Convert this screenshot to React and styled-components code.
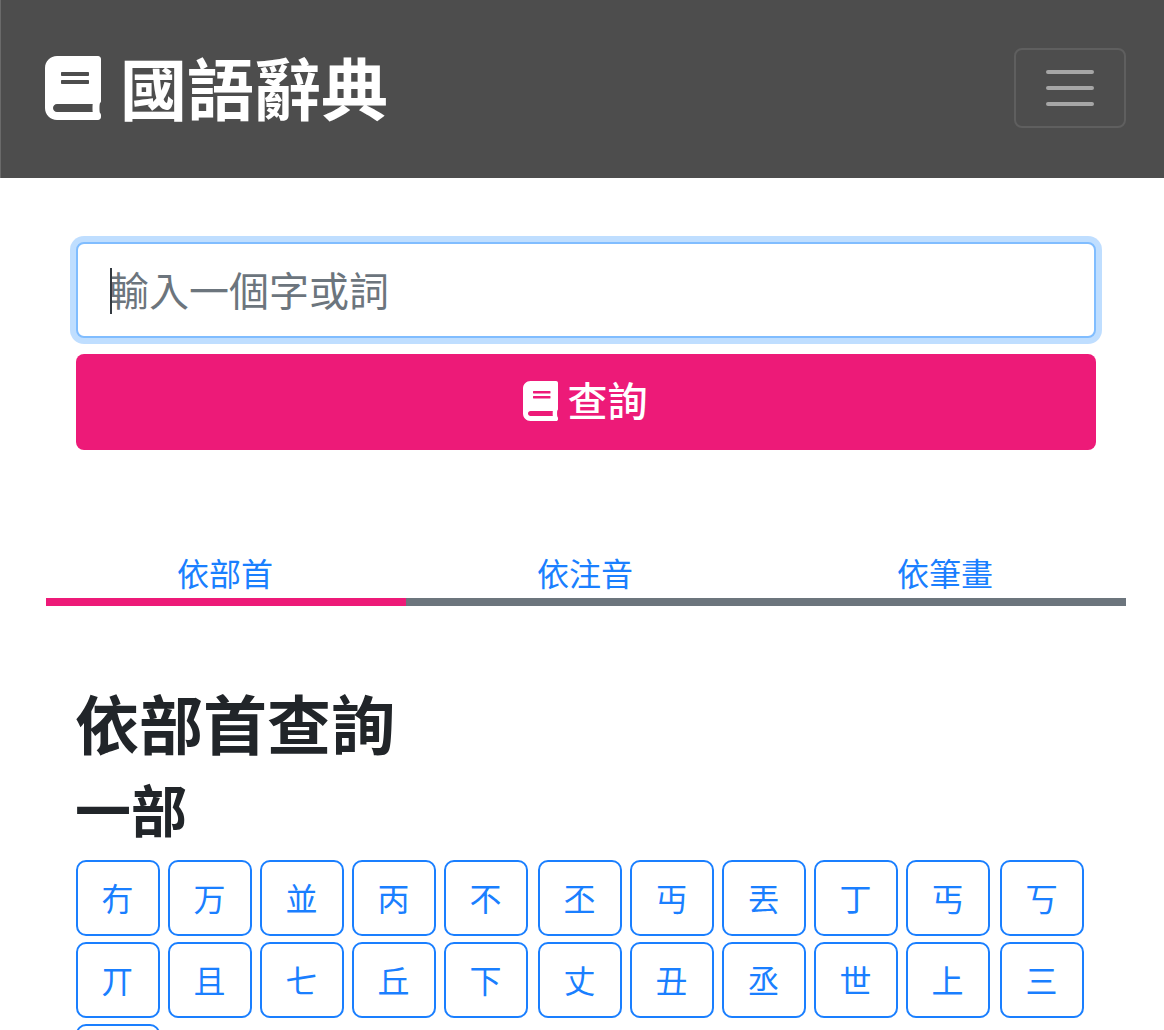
import React from 'react'
import styled, { createGlobalStyle } from 'styled-components'
import { FaBook } from 'react-icons/fa'

const GlobalStyle = createGlobalStyle`
  html, body {
    margin: 0;
    padding: 0;
    background: #fff;
    font-family: "Noto Sans CJK TC", "Liberation Sans", sans-serif;
    color: #212529;
  }
  * {
    box-sizing: border-box;
  }
`

const Page = styled.div`
  width: 1164px;
  height: 1030px;
  overflow: hidden;
`

const Navbar = styled.nav`
  height: 178px;
  background: #4d4d4d;
  border-left: 1px solid #6a6a6a;
  padding: 0 38px 2px 44px;
  display: flex;
  align-items: center;
  justify-content: space-between;
`

const Brand = styled.a`
  display: flex;
  align-items: center;
  gap: 19px;
  color: #fff;
  font-size: 67px;
  font-weight: 700;
  line-height: 1;
  svg {
    width: 56px;
    height: 64px;
  }
`

const BrandText = styled.span`
  margin-bottom: 6px;
`

const Toggler = styled.button`
  width: 112px;
  height: 80px;
  padding: 0;
  background: transparent;
  border: 2px solid rgba(255, 255, 255, 0.1);
  border-radius: 8px;
  display: flex;
  align-items: center;
  justify-content: center;
`

const SearchForm = styled.form`
  margin: 64px 68px 0 76px;
  display: flex;
  flex-direction: column;
  gap: 16px;
`

const InputWrap = styled.div`
  position: relative;
  height: 96px;
`

const SearchInput = styled.input`
  width: 100%;
  height: 100%;
  padding: 0 31px 2px;
  font-family: inherit;
  font-size: 40px;
  background: #fff;
  border: 2px solid #80bdff;
  border-radius: 8px;
  outline: none;
  box-shadow: 0 0 0 6px rgba(0, 123, 255, 0.25);
  &::placeholder {
    color: #6c757d;
    opacity: 1;
  }
`

const Caret = styled.span`
  position: absolute;
  left: 34px;
  top: 26px;
  width: 2px;
  height: 46px;
  background: #343a40;
`

const SearchButton = styled.button`
  height: 96px;
  padding: 0 2px 6px 0;
  background: #ed1a78;
  border: none;
  border-radius: 8px;
  color: #fff;
  font-family: inherit;
  font-size: 40px;
  font-weight: 500;
  display: flex;
  align-items: center;
  justify-content: center;
  gap: 10px;
  svg {
    width: 35px;
    height: 40px;
    margin-top: 4px;
  }
`

const Tabs = styled.div`
  margin: 98px 38px 0 46px;
  display: grid;
  grid-template-columns: repeat(3, 1fr);
`

const Tab = styled.a`
  height: 58px;
  padding-right: 2px;
  text-align: center;
  color: #1a7fff;
  font-size: 32px;
  line-height: 48px;
  border-bottom: 8px solid ${({ $active }) => ($active ? '#ed1a78' : '#6c757d')};
`

const Content = styled.section`
  margin: 67px 68px 0 75px;
`

const Title = styled.h1`
  margin: 0;
  font-size: 64px;
  font-weight: 700;
  line-height: 96px;
`

const SectionTitle = styled.h2`
  margin: 3px 0 16px;
  font-size: 56px;
  font-weight: 700;
  line-height: 72px;
`

const WordGrid = styled.div`
  margin-left: 1px;
  display: flex;
  flex-wrap: wrap;
  gap: 6px 8px;
`

const WordButton = styled.a`
  width: 84px;
  height: 76px;
  padding: 0 1px 3px 0;
  border: 2px solid #1a7fff;
  border-radius: 10px;
  color: #1a7fff;
  font-size: 32px;
  display: flex;
  align-items: center;
  justify-content: center;
  &:nth-child(11n + 6),
  &:nth-child(11n) {
    margin-left: 2px;
  }
`

const words = [
  '冇', '万', '並', '丙', '不', '丕', '丏', '丟', '丁', '丐', '丂',
  '丌', '且', '七', '丘', '下', '丈', '丑', '丞', '世', '上', '三',
  '',
]

const App = () => {
  return (
    <Page>
      <GlobalStyle />
      <Navbar>
        <Brand>
          <FaBook />
          <BrandText>國語辭典</BrandText>
        </Brand>
        <Toggler type="button" aria-label="Toggle navigation">
          <svg width="60" height="60" viewBox="0 0 60 60">
            <path
              d="M8 14h44M8 30h44M8 46h44"
              stroke="rgba(255,255,255,0.5)"
              strokeWidth="4"
              strokeLinecap="round"
            />
          </svg>
        </Toggler>
      </Navbar>
      <SearchForm>
        <InputWrap>
          <SearchInput placeholder="輸入一個字或詞" />
          <Caret />
        </InputWrap>
        <SearchButton type="button">
          <FaBook />
          查詢
        </SearchButton>
      </SearchForm>
      <Tabs>
        <Tab $active>依部首</Tab>
        <Tab>依注音</Tab>
        <Tab>依筆畫</Tab>
      </Tabs>
      <Content>
        <Title>依部首查詢</Title>
        <SectionTitle>一部</SectionTitle>
        <WordGrid>
          {words.map((w, i) => (
            <WordButton key={i}>{w}</WordButton>
          ))}
        </WordGrid>
      </Content>
    </Page>
  )
}

export default App
